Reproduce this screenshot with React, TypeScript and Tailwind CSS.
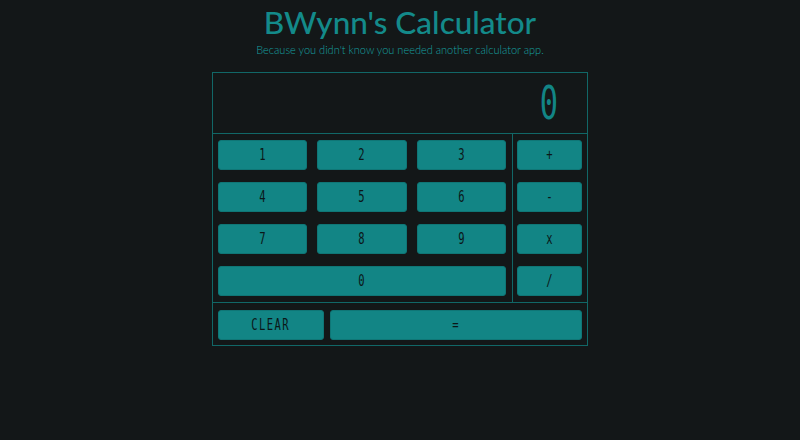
import React from "react";

const mono = { fontFamily: '"DejaVu Sans Mono", "Liberation Mono", monospace' };

function Key({ label, className = "" }: { label: string; className?: string }) {
  return (
    <button
      className={`h-[30px] rounded-[3px] bg-[#128585] border border-[#0f7676] text-[#0b1718] text-[15px] flex items-center justify-center ${className}`}
      style={mono}
    >
      <span className="inline-block scale-x-[0.7]">{label}</span>
    </button>
  );
}

export default function App() {
  const nums = ["1", "2", "3", "4", "5", "6", "7", "8", "9"];
  const ops = ["+", "-", "x", "/"];
  return (
    <div
      className="min-h-[440px] w-full bg-[#131718] flex flex-col items-center"
      style={{ fontFamily: 'Lato, "Open Sans", sans-serif' }}
    >
      <h1 className="pt-[3px] text-[31.5px] leading-[39px] text-[#138a8a] font-medium">BWynn's Calculator</h1>
      <p className="text-[11px] leading-[16px] font-light text-[#16a0a0]">
        Because you didn't know you needed another calculator app.
      </p>
      <div className="mt-[14px] w-[376px] border border-[#116767]">
        <div className="h-[60px] flex items-center justify-end pr-[24px]">
          <span className="inline-block text-[46px] leading-none text-[#128585] scale-x-[0.66]" style={mono}>
            0
          </span>
        </div>
        <div className="flex border-t border-[#116767]">
          <div className="w-[299px] grid grid-cols-3 gap-x-[10px] gap-y-[12px] pl-[5px] pr-[6px] py-[6px]">
            {nums.map((n) => (
              <Key key={n} label={n} />
            ))}
            <Key label="0" className="col-span-3" />
          </div>
          <div className="flex-1 border-l border-[#116767] flex flex-col gap-[12px] pl-[4px] pr-[5px] py-[6px]">
            {ops.map((o) => (
              <Key key={o} label={o} />
            ))}
          </div>
        </div>
        <div className="flex gap-[6px] border-t border-[#116767] pl-[5px] pr-[5px] pt-[7px] pb-[5px]">
          <Key label="CLEAR" className="w-[106px] tracking-[2px]" />
          <Key label="=" className="flex-1" />
        </div>
      </div>
    </div>
  );
}
